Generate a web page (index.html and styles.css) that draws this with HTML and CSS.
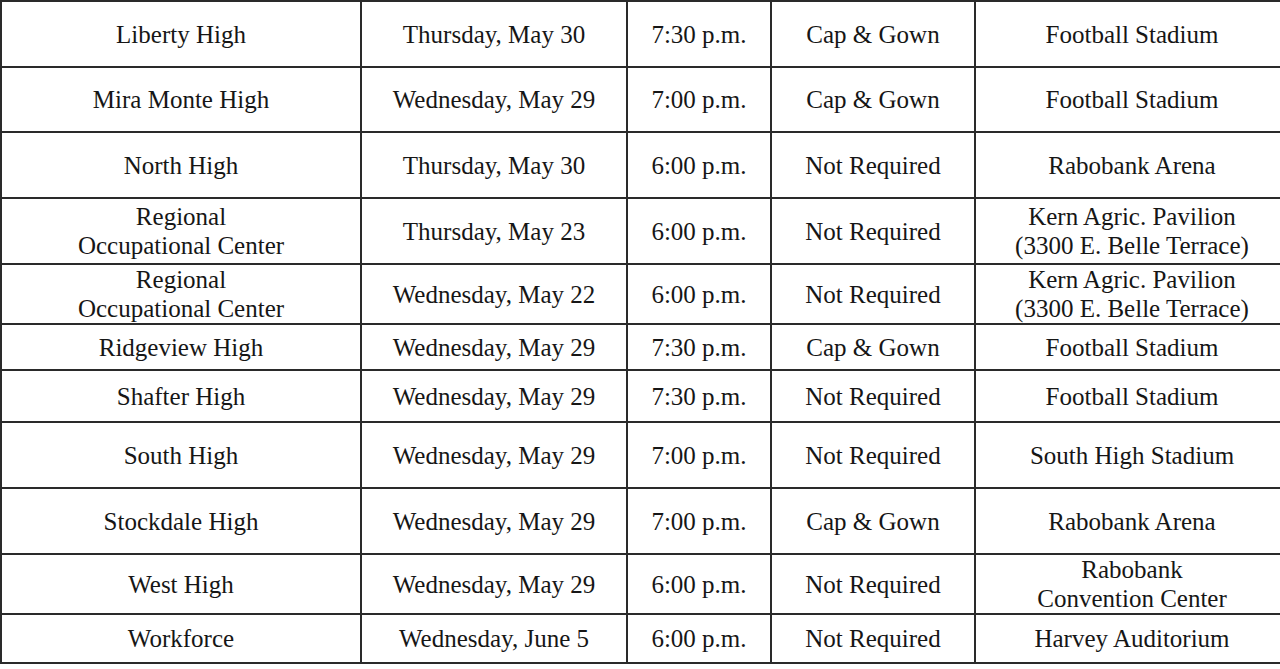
FILE: index.html
```html
<!DOCTYPE html>
<html>
<head>
<meta charset="utf-8">
<link rel="stylesheet" href="styles.css">
</head>
<body>
<table class="schedule">
  <colgroup>
    <col class="c1"><col class="c2"><col class="c3"><col class="c4"><col class="c5">
  </colgroup>
  <tr class="h66"><td>Liberty High</td><td>Thursday, May 30</td><td>7:30 p.m.</td><td>Cap &amp; Gown</td><td>Football Stadium</td></tr>
  <tr class="h65"><td>Mira Monte High</td><td>Wednesday, May 29</td><td>7:00 p.m.</td><td>Cap &amp; Gown</td><td>Football Stadium</td></tr>
  <tr class="h66"><td>North High</td><td>Thursday, May 30</td><td>6:00 p.m.</td><td>Not Required</td><td>Rabobank Arena</td></tr>
  <tr class="h66"><td>Regional<br>Occupational Center</td><td>Thursday, May 23</td><td>6:00 p.m.</td><td>Not Required</td><td>Kern Agric. Pavilion<br>(3300 E. Belle Terrace)</td></tr>
  <tr class="h60"><td>Regional<br>Occupational Center</td><td>Wednesday, May 22</td><td>6:00 p.m.</td><td>Not Required</td><td>Kern Agric. Pavilion<br>(3300 E. Belle Terrace)</td></tr>
  <tr class="h46"><td>Ridgeview High</td><td>Wednesday, May 29</td><td>7:30 p.m.</td><td>Cap &amp; Gown</td><td>Football Stadium</td></tr>
  <tr class="h52"><td>Shafter High</td><td>Wednesday, May 29</td><td>7:30 p.m.</td><td>Not Required</td><td>Football Stadium</td></tr>
  <tr class="h66"><td>South High</td><td>Wednesday, May 29</td><td>7:00 p.m.</td><td>Not Required</td><td>South High Stadium</td></tr>
  <tr class="h66"><td>Stockdale High</td><td>Wednesday, May 29</td><td>7:00 p.m.</td><td>Cap &amp; Gown</td><td>Rabobank Arena</td></tr>
  <tr class="h60"><td>West High</td><td>Wednesday, May 29</td><td>6:00 p.m.</td><td>Not Required</td><td>Rabobank<br>Convention Center</td></tr>
  <tr class="h49"><td>Workforce</td><td>Wednesday, June 5</td><td>6:00 p.m.</td><td>Not Required</td><td>Harvey Auditorium</td></tr>
</table>
</body>
</html>
```
FILE: styles.css
```css
html, body {
  margin: 0;
  padding: 0;
  background: #ffffff;
  overflow: hidden;
}
body {
  width: 1280px;
  height: 669px;
}
.schedule {
  border-collapse: collapse;
  table-layout: fixed;
  width: 1288px;
  margin: 0;
  font-family: "Liberation Serif", "Times New Roman", serif;
  font-size: 25px;
  line-height: 29px;
  color: #161616;
}
.schedule td {
  border: 2px solid #2a2a2a;
  text-align: center;
  vertical-align: middle;
  padding: 0;
  white-space: nowrap;
}
.c1 { width: 360px; }
.c2 { width: 266px; }
.c3 { width: 144px; }
.c4 { width: 204px; }
.c5 { width: 314px; }
.h66 { height: 66px; }
.h65 { height: 65px; }
.h60 { height: 60px; }
.h52 { height: 52px; }
.h49 { height: 49px; }
.h46 { height: 46px; }
```
